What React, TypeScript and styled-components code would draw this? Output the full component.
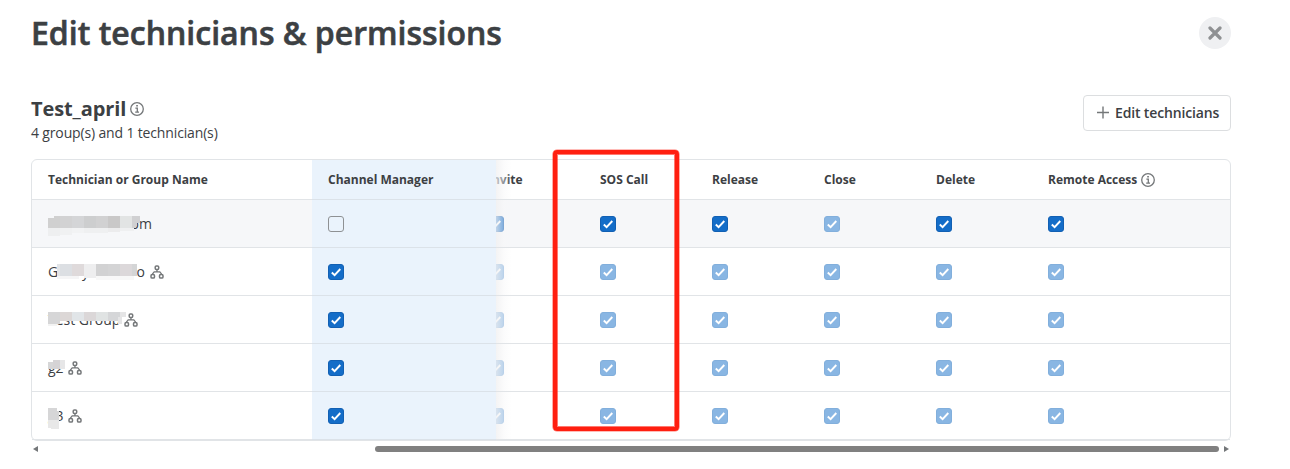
import React from "react";
import styled, { createGlobalStyle, css } from "styled-components";

const GlobalStyle = createGlobalStyle`
  * { box-sizing: border-box; }
  body {
    margin: 0;
    background: #fff;
    color: #3c4043;
    font-family: "Open Sans", "Noto Sans", sans-serif;
    font-size: 14px;
    overflow: hidden;
  }
`;

const Page = styled.main`
  width: 1231px;
  height: 469px;
  padding: 11px 0 0 31px;
`;

const TitleBar = styled.header`
  display: flex;
  justify-content: space-between;
  align-items: center;
  height: 44px;
`;

const Title = styled.h1`
  margin: 0;
  font-size: 32px;
  line-height: 44px;
  font-weight: 600;
  -webkit-text-stroke: 0.6px currentColor;
  white-space: nowrap;
`;

const CloseButton = styled.button`
  display: flex;
  align-items: center;
  justify-content: center;
  width: 32px;
  height: 32px;
  padding: 0;
  border: 0;
  border-radius: 50%;
  background: #eff0f2;
`;

const SubHeader = styled.section`
  display: flex;
  justify-content: space-between;
  height: 64px;
  margin-top: 40px;
`;

const ChannelName = styled.h2`
  display: flex;
  align-items: center;
  gap: 4px;
  margin: 0;
  font-size: 20px;
  line-height: 28px;
  font-weight: 700;
  letter-spacing: -0.1px;
`;

const Summary = styled.p`
  margin: 0;
  line-height: 20px;
  letter-spacing: -0.15px;
`;

const EditButton = styled.button`
  display: flex;
  align-items: center;
  gap: 6px;
  width: 148px;
  height: 36px;
  padding: 0 0 1px 13px;
  border: 1px solid #dcdee0;
  border-radius: 4px;
  background: #fff;
  color: #3c4043;
  font: 600 14px/20px "Open Sans", sans-serif;
  letter-spacing: -0.15px;
  white-space: nowrap;
`;

const Table = styled.div`
  position: relative;
  width: 1200px;
  height: 282px;
  border: 1px solid #e1e4e7;
  border-radius: 6px;
`;

const Row = styled.div<{ $head?: boolean; $shaded?: boolean; $last?: boolean }>`
  display: grid;
  grid-template-columns: 280px 184px 88px repeat(4, 112px) 1fr;
  height: ${(p) => (p.$head ? 40 : 48)}px;
  background: ${(p) => (p.$shaded ? "#f6f7f9" : "transparent")};
  ${(p) =>
    p.$head &&
    css`
      font-size: 12px;
      font-weight: 700;
    `}
  ${(p) =>
    p.$last &&
    css`
      & > * {
        border-bottom-color: transparent;
      }
    `}
`;

const Cell = styled.div<{ $pinned?: boolean }>`
  display: flex;
  align-items: center;
  min-width: 0;
  padding-left: 16px;
  border-bottom: 1px solid ${(p) => (p.$pinned ? "#dbe2e9" : "#e1e4e7")};
  background: ${(p) => (p.$pinned ? "#eaf3fc" : "transparent")};
  white-space: nowrap;
`;

const ClippedCell = styled(Cell)`
  position: relative;
  justify-content: flex-end;
  padding: 0;
  overflow: hidden;
  &::after {
    content: "";
    position: absolute;
    inset: 0 auto 0 0;
    width: 16px;
    background: linear-gradient(
      to right,
      rgba(240, 240, 241, 0.78),
      rgba(247, 247, 248, 0.45) 50%,
      rgba(255, 255, 255, 0)
    );
  }
`;

const ScrolledContent = styled.div`
  flex: 0 0 96px;
`;

const IconSlot = styled.span<{ $gap: number }>`
  display: flex;
  margin-left: ${(p) => p.$gap}px;
`;

const Box = styled.span<{ $state: CheckState }>`
  display: flex;
  width: 16px;
  height: 16px;
  border-radius: 3px;
  border: 1px solid
    ${(p) => ({ on: "#1260b3", muted: "#82afdc", off: "#8e9194" })[p.$state]};
  background: ${(p) =>
    ({ on: "#146dc8", muted: "#89b6e3", off: "transparent" })[p.$state]};
`;

const NameText = styled.div`
  position: relative;
  display: flex;
  align-items: center;
  height: 24px;
`;

const Label = styled.span<{ $width: number; $end?: boolean }>`
  display: flex;
  justify-content: ${(p) => (p.$end ? "flex-end" : "space-between")};
  width: ${(p) => p.$width}px;
  line-height: 20px;
`;

const Redaction = styled.svg`
  position: absolute;
  left: 0;
  top: 0;
`;

const Highlight = styled.div`
  position: absolute;
  left: 521px;
  top: -10px;
  width: 126px;
  height: 281px;
  border: 4px solid #ff1f10;
  border-radius: 4px;
  box-shadow: 0 0 0 0.6px rgba(255, 31, 16, 0.6), inset 0 0 0 1px rgba(255, 31, 16, 0.6);
`;

const ScrollBar = styled.div`
  display: flex;
  align-items: center;
  height: 6px;
  margin-top: 5px;
  padding: 0 2px;
`;

const Thumb = styled.div`
  width: 844px;
  height: 6px;
  margin: 0 5px 0 auto;
  border-radius: 3px;
  background: #808080;
`;

type CheckState = "on" | "muted" | "off";

const Check = ({ state }: { state: CheckState }) => (
  <Box $state={state}>
    {state !== "off" && (
      <svg width="14" height="14" viewBox="0 0 14 14" fill="none">
        <path d="M2.8 7.5 5.6 10.2 11.3 4" stroke="#fff" strokeWidth="1.9" />
      </svg>
    )}
  </Box>
);

const InfoIcon = () => (
  <svg width="14" height="14" viewBox="0 0 14 14" fill="none" stroke="#747779">
    <circle cx="7" cy="7" r="6.3" strokeWidth="1.3" />
    <path d="M5.4 6.1H7.3V10M5.2 10.1H9" strokeWidth="1.3" />
    <path d="M6.2 3.7H7.9" strokeWidth="1.6" />
  </svg>
);

const GroupIcon = () => (
  <svg width="14" height="14" viewBox="0 0 14 14" fill="none" stroke="#747779" strokeWidth="1.5">
    <rect x="5.2" y="0.9" width="3.5" height="3.5" rx="1.2" />
    <rect x="1" y="9.6" width="3.5" height="3.5" rx="1.2" />
    <rect x="9.5" y="9.6" width="3.5" height="3.5" rx="1.2" />
    <path d="M6.95 4.4V6.8M2.7 9.6V8.7L4.2 6.9H9.8L11.3 8.7V9.6" strokeWidth="1.3" />
  </svg>
);

type Block = [x: number, y: number, w: number, h: number, fill: string];

interface Entry {
  parts: string[];
  width: number;
  end?: boolean;
  group: boolean;
  mask: Block[];
  checks: CheckState[];
}

const inherited: CheckState[] = ["on", "muted", "muted", "muted", "muted", "muted", "muted"];

const entries: Entry[] = [
  {
    parts: ["om"], width: 104, end: true, group: false,
    checks: ["off", "on", "on", "on", "muted", "on", "on"],
    mask: [
      [0, 6, 6, 10, "#d0d0d0"], [6, 4, 6, 12, "#d0d0d0"], [12, 4, 12, 12, "#d2d2d3"],
      [24, 4, 12, 12, "#d4d5d7"], [36, 4, 12, 12, "#cdcecf"], [48, 4, 12, 12, "#d1d1d2"],
      [60, 4, 12, 12, "#c9c8c8"], [72, 4, 12, 12, "#e2e4e4"], [84, 4, 8, 7, "#d0d0d2"],
      [84, 11, 5, 3, "#d0d0d2"], [84, 14, 4, 2, "#d0d0d2"], [0, 16, 12, 8, "#eeeff0"],
      [12, 16, 12, 7, "#f0f1f2"], [24, 16, 12, 5, "#f2f3f4"], [36, 16, 24, 5, "#eff0f1"],
      [60, 16, 12, 4, "#ececed"], [72, 16, 14, 3, "#eff0f1"],
    ],
  },
  {
    parts: ["G", "y", "", "o"], width: 97, group: true, checks: inherited,
    mask: [
      [9, 4, 3, 12, "#e2e4e7"], [12, 4, 12, 12, "#dcdfe3"], [24, 4, 12, 12, "#dfdadb"],
      [36, 4, 12, 14, "#eeeeef"], [48, 4, 12, 12, "#d2d2d3"], [60, 4, 12, 12, "#d4d4d5"],
      [72, 4, 12, 12, "#dcd8da"], [84, 4, 5, 12, "#d4d5d6"], [9, 16, 22, 3, "#f5f5f6"],
      [48, 16, 38, 4, "#f8f8f8"],
    ],
  },
  {
    parts: ["Test Group"], width: 71, group: true, checks: inherited,
    mask: [
      [0, 4, 12, 12, "#d6d6d7"], [0, 16, 9, 2, "#f3f3f3"], [12, 4, 12, 9, "#dcd7d6"],
      [24, 4, 12, 9, "#e1e5e8"], [36, 4, 12, 9, "#dbd7d8"], [48, 4, 12, 9, "#e0e3e3"],
      [60, 4, 12, 9, "#d5d6d8"], [72, 4, 6, 5, "#e5e5e6"], [70, 9, 4, 7, "#e5e5e6"],
    ],
  },
  {
    parts: ["g2"], width: 15, group: true, checks: inherited,
    mask: [[0, 6, 5, 7, "#d6d6d7"], [5, 4, 7, 9, "#d5d3d5"], [12, 4, 5, 9, "#e6e6e7"]],
  },
  {
    parts: ["g3"], width: 15, group: true, checks: inherited,
    mask: [
      [0, 4, 9, 3, "#d6d6d7"], [0, 7, 11, 9, "#d6d6d7"],
      [0, 16, 11, 8, "#e8e8e8"], [3, 24, 8, 1, "#e8e8e8"],
    ],
  },
];

const Name = ({ entry }: { entry: Entry }) => (
  <NameText>
    <Label $width={entry.width} $end={entry.end}>
      {entry.parts.map((part) => (
        <span key={part}>{part}</span>
      ))}
    </Label>
    {entry.group && (
      <IconSlot $gap={5}>
        <GroupIcon />
      </IconSlot>
    )}
    <Redaction width="94" height="26" shapeRendering="crispEdges">
      {entry.mask.map(([x, y, w, h, fill], i) => (
        <rect key={i} x={x} y={y} width={w} height={h} fill={fill} />
      ))}
    </Redaction>
  </NameText>
);

export default function App() {
  return (
    <>
      <GlobalStyle />
      <Page>
        <TitleBar>
          <Title>Edit technicians &amp; permissions</Title>
          <CloseButton aria-label="Close">
            <svg width="14" height="14" viewBox="0 0 14 14">
              <path d="M2 2 12 12M12 2 2 12" stroke="#8f9193" strokeWidth="3.2" strokeLinecap="round" />
            </svg>
          </CloseButton>
        </TitleBar>
        <SubHeader>
          <div>
            <ChannelName>
              Test_april <InfoIcon />
            </ChannelName>
            <Summary>4 group(s) and 1 technician(s)</Summary>
          </div>
          <EditButton>
            <svg width="12" height="13" viewBox="0 0 12 13">
              <path d="M6 0.5V12.5M0 6.5H12" stroke="#747779" strokeWidth="1.4" />
            </svg>
            Edit technicians
          </EditButton>
        </SubHeader>
        <Table>
          <Row $head>
            <Cell>Technician or Group Name</Cell>
            <Cell $pinned>Channel Manager</Cell>
            <ClippedCell>
              <ScrolledContent>Invite</ScrolledContent>
            </ClippedCell>
            <Cell>SOS Call</Cell>
            <Cell>Release</Cell>
            <Cell>Close</Cell>
            <Cell>Delete</Cell>
            <Cell>
              Remote Access
              <IconSlot $gap={4}>
                <InfoIcon />
              </IconSlot>
            </Cell>
          </Row>
          {entries.map((entry, i) => (
            <Row key={i} $shaded={i === 0} $last={i === entries.length - 1}>
              <Cell>
                <Name entry={entry} />
              </Cell>
              <Cell $pinned>
                <Check state={entry.checks[0]} />
              </Cell>
              <ClippedCell>
                <ScrolledContent>
                  <Check state={entry.checks[1]} />
                </ScrolledContent>
              </ClippedCell>
              {entry.checks.slice(2).map((state, c) => (
                <Cell key={c}>
                  <Check state={state} />
                </Cell>
              ))}
            </Row>
          ))}
          <Highlight />
        </Table>
        <ScrollBar>
          <svg width="5" height="6" viewBox="0 0 5 6">
            <path d="M5 0V6L0 3Z" fill="#747779" />
          </svg>
          <Thumb />
          <svg width="5" height="6" viewBox="0 0 5 6">
            <path d="M0 0V6L5 3Z" fill="#747779" />
          </svg>
        </ScrollBar>
      </Page>
    </>
  );
}
